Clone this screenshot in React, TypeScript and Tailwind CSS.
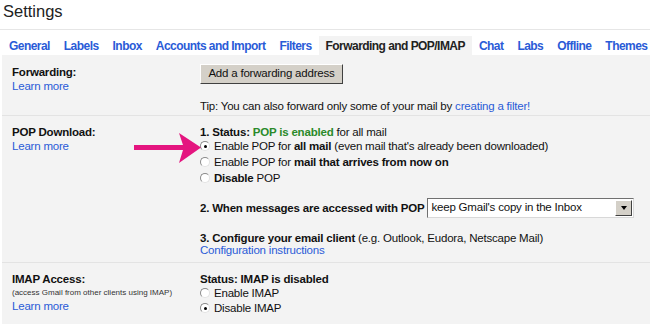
import React from "react";

const tabs = [
  "General",
  "Labels",
  "Inbox",
  "Accounts and Import",
  "Filters",
  "Forwarding and POP/IMAP",
  "Chat",
  "Labs",
  "Offline",
  "Themes",
];

function Radio({ checked }: { checked?: boolean }) {
  return (
    <span className="relative inline-block w-[10px] h-[10px] rounded-full border border-[#8a8a8a] border-r-[#e2e2e2] border-b-[#e2e2e2] bg-white mr-[4px] align-[-1px]">
      {checked && (
        <span className="absolute left-[2.5px] top-[2.5px] w-[3px] h-[3px] rounded-full bg-black" />
      )}
    </span>
  );
}

function Link({ children }: { children: React.ReactNode }) {
  return <span className="text-[#2a5bd7]">{children}</span>;
}

export default function App() {
  return (
    <div
      className="relative w-[650px] h-[324px] overflow-hidden bg-white text-[11.5px] leading-[14px] tracking-[-0.2px] text-[#111] whitespace-nowrap"
      style={{ fontFamily: '"Liberation Sans", Arial, sans-serif' }}
    >
      {/* title */}
      <div className="h-[30px] border-b border-[#e6e6e6] pl-[3px] pt-[2px] text-[16.5px] leading-[18px] tracking-[0px] text-[#222]">
        Settings
      </div>

      {/* tabs */}
      <div className="flex pl-[2px] mt-[6px] h-[19px] items-stretch">
        {tabs.map((t) => {
          const active = t === "Forwarding and POP/IMAP";
          return (
            <div
              key={t}
              className={
                active
                  ? "px-[7px] pt-[3px] bg-[#f3f3f3] font-bold text-[12px] tracking-[-0.55px] text-[#222]"
                  : "px-[7px] pt-[3px] font-bold text-[12px] tracking-[-0.55px] text-[#2a5bd7]"
              }
            >
              {t}
            </div>
          );
        })}
      </div>

      {/* panel */}
      <div className="ml-[2px] bg-[#f3f3f3] h-full">
        {/* Forwarding */}
        <div className="flex h-[61px] border-b border-[#e3e3e3]">
          <div className="w-[198px] pl-[10px] pt-[10px]">
            <div className="font-bold">Forwarding:</div>
            <div>
              <Link>Learn more</Link>
            </div>
          </div>
          <div className="pt-[9px]">
            <div className="w-[143px] h-[20px] bg-[#d4d0c8] border border-t-white border-l-white border-r-[#404040] border-b-[#404040] text-center leading-[17px]">
              Add a forwarding address
            </div>
            <div className="mt-[15px]">
              Tip: You can also forward only some of your mail by <Link>creating a filter!</Link>
            </div>
          </div>
        </div>

        {/* POP */}
        <div className="flex h-[147px] border-b border-[#e3e3e3]">
          <div className="w-[198px] pl-[10px] pt-[9px]">
            <div className="font-bold">POP Download:</div>
            <div>
              <Link>Learn more</Link>
            </div>
          </div>
          <div className="pt-[9px]">
            <div>
              <b>1. Status: </b>
              <b className="text-[#2a8a2a]">POP is enabled</b> for all mail
            </div>
            <div className="leading-[16px] -mt-[1px]">
              <div>
                <Radio checked />
                Enable POP for <b>all mail</b> (even mail that's already been downloaded)
              </div>
              <div>
                <Radio />
                Enable POP for <b>mail that arrives from now on</b>
              </div>
              <div>
                <Radio />
                <b>Disable</b> POP
              </div>
            </div>
            <div className="flex items-center mt-[12px]">
              <b>2. When messages are accessed with POP</b>
              <div className="ml-[3px] flex w-[207px] h-[20px] bg-white border border-t-[#707070] border-l-[#707070] border-r-[#d8d8d8] border-b-[#d8d8d8]">
                <div className="flex-1 pl-[3px] leading-[17px]">keep Gmail's copy in the Inbox</div>
                <div className="w-[17px] m-[1px] bg-[#d4d0c8] border border-t-white border-l-white border-r-[#404040] border-b-[#404040] flex items-center justify-center">
                  <span className="w-0 h-0 border-l-[3.5px] border-r-[3.5px] border-t-[4px] border-l-transparent border-r-transparent border-t-black" />
                </div>
              </div>
            </div>
            <div className="mt-[13px]">
              <b>3. Configure your email client</b> (e.g. Outlook, Eudora, Netscape Mail)
            </div>
            <div className="-mt-[2px]">
              <Link>Configuration instructions</Link>
            </div>
          </div>
        </div>

        {/* IMAP */}
        <div className="flex">
          <div className="w-[198px] pl-[10px] pt-[9px]">
            <div className="font-bold">IMAP Access:</div>
            <div className="text-[8px] leading-[13px] tracking-[0px] text-[#333]">(access Gmail from other clients using IMAP)</div>
            <div>
              <Link>Learn more</Link>
            </div>
          </div>
          <div className="pt-[9px]">
            <div className="font-bold">Status: IMAP is disabled</div>
            <div className="leading-[14px]">
              <Radio />
              Enable IMAP
            </div>
            <div className="leading-[16px]">
              <Radio checked />
              Disable IMAP
            </div>
          </div>
        </div>
      </div>

      {/* annotation arrow */}
      <svg className="absolute left-[134px] top-[132px]" width="68" height="32" viewBox="0 0 68 32">
        <path d="M0 13 H49 L45 1 L67 15.5 L45 31 L49 18 H0 Z" fill="#e4157f" />
      </svg>
    </div>
  );
}
